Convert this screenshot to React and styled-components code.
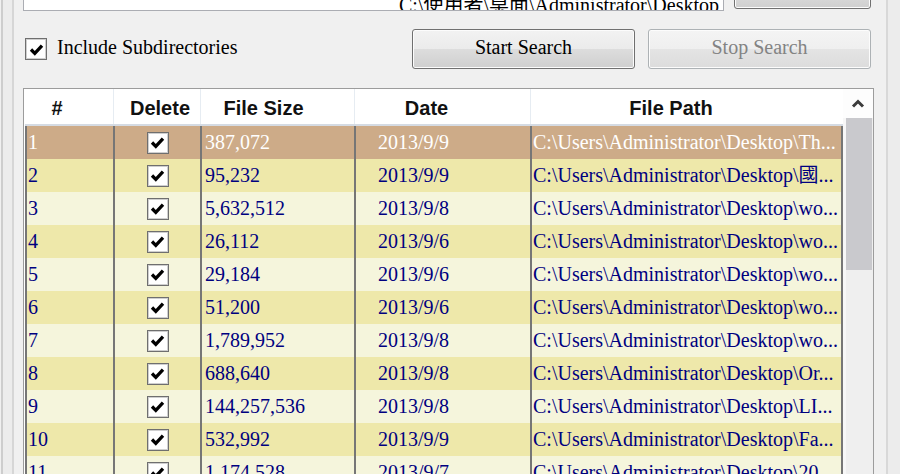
import React from "react";
import styled, { createGlobalStyle } from "styled-components";

const GlobalStyle = createGlobalStyle`
  html, body {
    margin: 0;
    padding: 0;
  }
  body {
    background: #f0f0f0;
    font-family: "Liberation Serif", "Noto Sans CJK TC", serif;
  }
`;

const rows = [
  ["1", "387,072", "2013/9/9", "C:\\Users\\Administrator\\Desktop\\Th..."],
  ["2", "95,232", "2013/9/9", "C:\\Users\\Administrator\\Desktop\\國..."],
  ["3", "5,632,512", "2013/9/8", "C:\\Users\\Administrator\\Desktop\\wo..."],
  ["4", "26,112", "2013/9/6", "C:\\Users\\Administrator\\Desktop\\wo..."],
  ["5", "29,184", "2013/9/6", "C:\\Users\\Administrator\\Desktop\\wo..."],
  ["6", "51,200", "2013/9/6", "C:\\Users\\Administrator\\Desktop\\wo..."],
  ["7", "1,789,952", "2013/9/8", "C:\\Users\\Administrator\\Desktop\\wo..."],
  ["8", "688,640", "2013/9/8", "C:\\Users\\Administrator\\Desktop\\Or..."],
  ["9", "144,257,536", "2013/9/8", "C:\\Users\\Administrator\\Desktop\\LI..."],
  ["10", "532,992", "2013/9/9", "C:\\Users\\Administrator\\Desktop\\Fa..."],
  ["11", "1,174,528", "2013/9/7", "C:\\Users\\Administrator\\Desktop\\20..."],
];

const headers = [
  { label: "#", shift: -12 },
  { label: "Delete", shift: 3 },
  { label: "File Size", shift: -14 },
  { label: "Date", shift: -16 },
  { label: "File Path", shift: -16 },
];

const Check = () => (
  <svg width="15" height="13" viewBox="0 0 15 13">
    <polyline
      points="2,6.5 5.8,10.3 13,2.6"
      fill="none"
      stroke="#000"
      strokeWidth="3.3"
    />
  </svg>
);

export default function App() {
  return (
    <>
      <GlobalStyle />
      <Window>
        <LeftRail />
        <Main>
          <TopRow>
            <PathInput>
              <PathText>C:\使用者\桌面\Administrator\Desktop</PathText>
            </PathInput>
            <Button $w={137} $h={36} />
          </TopRow>
          <ControlRow>
            <CheckLabel>
              <Box>
                <Check />
              </Box>
              <LabelText>Include Subdirectories</LabelText>
            </CheckLabel>
            <Button $w={223} $h={40}>
              Start Search
            </Button>
            <Button $w={223} $h={40} disabled>
              Stop Search
            </Button>
          </ControlRow>
          <Table>
            <Grid>
              <HeaderRow>
                {headers.map((h) => (
                  <HeadCell key={h.label} $shift={h.shift}>
                    {h.label}
                  </HeadCell>
                ))}
              </HeaderRow>
              {rows.map((r, i) => (
                <Row
                  key={r[0]}
                  $tone={i === 0 ? "selected" : i % 2 === 1 ? "gold" : "pale"}
                >
                  <Cell $pad={1}>{r[0]}</Cell>
                  <Cell $center>
                    <Box>
                      <Check />
                    </Box>
                  </Cell>
                  <Cell $pad={3}>{r[1]}</Cell>
                  <Cell $pad={22}>{r[2]}</Cell>
                  <Cell $pad={1} $last>
                    {r[3]}
                  </Cell>
                </Row>
              ))}
            </Grid>
            <ScrollBar>
              <ScrollUp>
                <svg width="14" height="9" viewBox="0 0 14 9">
                  <polyline
                    points="2,7.5 7,2.5 12,7.5"
                    fill="none"
                    stroke="#3c3c3c"
                    strokeWidth="3"
                  />
                </svg>
              </ScrollUp>
              <Thumb />
            </ScrollBar>
          </Table>
        </Main>
        <RightRail />
      </Window>
    </>
  );
}

const Window = styled.div`
  display: flex;
  width: 900px;
  height: 474px;
  overflow: hidden;
  background: #f0f0f0;
`;

const LeftRail = styled.div`
  width: 23px;
  flex-shrink: 0;
  background: linear-gradient(
    90deg,
    #f0f0f0 0 1px,
    #cdcdcd 1px 3px,
    #ececec 3px 12px,
    #d6d6d6 12px 14px,
    #f0f0f0 14px
  );
`;

const RightRail = styled.div`
  width: 26px;
  flex-shrink: 0;
  background: linear-gradient(
    90deg,
    #f0f0f0 0 12px,
    #d8d8d8 12px 14px,
    #ececec 14px
  );
`;

const Main = styled.div`
  width: 851px;
  flex-shrink: 0;
  display: flex;
  flex-direction: column;
  min-height: 0;
`;

const TopRow = styled.div`
  height: 11px;
  flex-shrink: 0;
  display: flex;
  align-items: flex-end;
  gap: 10px;
  padding-right: 3px;
  overflow: hidden;
`;

const PathInput = styled.div`
  width: 701px;
  height: 40px;
  box-sizing: border-box;
  flex-shrink: 0;
  border: 1px solid #abadb3;
  background: #fff;
  display: flex;
  align-items: flex-end;
  justify-content: flex-end;
  padding: 0 4px;
  overflow: hidden;
  font-size: 20px;
  line-height: 20px;
  color: #000;
  white-space: nowrap;
`;

const PathText = styled.span`
  margin-bottom: -5px;
`;

const Button = styled.button`
  width: ${(p) => p.$w}px;
  height: ${(p) => p.$h}px;
  flex-shrink: 0;
  box-sizing: border-box;
  margin: 0 0 ${(p) => (p.$h === 36 ? 2 : 0)}px;
  padding: 0 0 3px;
  border: 1px solid #707070;
  border-radius: 3px;
  box-shadow: inset 0 0 0 1px #fcfcfc;
  background: linear-gradient(
    #f2f2f2 0%,
    #ebebeb 50%,
    #dddddd 50%,
    #cfcfcf 100%
  );
  font-family: "Liberation Serif", serif;
  font-size: 20px;
  color: #000;
  &:disabled {
    color: #838383;
    border-color: #adb2b5;
    background: linear-gradient(
      #f4f4f4 0%,
      #efefef 50%,
      #e4e4e4 50%,
      #dcdcdc 100%
    );
  }
`;

const ControlRow = styled.div`
  margin-top: 18px;
  height: 40px;
  flex-shrink: 0;
  display: flex;
  align-items: center;
  gap: 13px;
  padding-right: 3px;
`;

const CheckLabel = styled.label`
  flex: 1;
  display: flex;
  align-items: center;
  gap: 10px;
  padding-left: 2px;
  font-size: 20px;
  color: #000;
`;

const LabelText = styled.span`
  margin-top: -4px;
`;

const Box = styled.span`
  width: 22px;
  height: 22px;
  box-sizing: border-box;
  flex-shrink: 0;
  display: inline-flex;
  align-items: center;
  justify-content: center;
  background: #fff;
  border: 1px solid #6f6f6f;
  box-shadow: inset 0 0 0 1px #cfcfcf;
`;

const Table = styled.div`
  margin-top: 19px;
  flex: 1;
  min-height: 0;
  display: flex;
  box-sizing: border-box;
  border: 1px solid #9c9c9c;
  border-bottom: none;
  padding-left: 1px;
  background: #fff;
  overflow: hidden;
`;

const Grid = styled.div`
  width: 818px;
  flex-shrink: 0;
  display: flex;
  flex-direction: column;
`;

const columns = "88px 87px 154px 176px 313px";

const HeaderRow = styled.div`
  display: grid;
  grid-template-columns: ${columns};
  height: 37px;
  box-sizing: border-box;
  flex-shrink: 0;
  border-bottom: 2px solid #d5dbe3;
  background: #fff;
`;

const HeadCell = styled.div`
  display: flex;
  align-items: center;
  justify-content: center;
  padding-top: 3px;
  padding-left: ${(p) => Math.max(0, p.$shift * 2)}px;
  padding-right: ${(p) => Math.max(0, -p.$shift * 2)}px;
  border-left: 1px solid #e6ecf2;
  font-family: "Liberation Sans", Arial, sans-serif;
  font-weight: bold;
  font-size: 20px;
  color: #111;
  &:first-child {
    border-left: none;
  }
`;

const tones = {
  selected: { bg: "#cdab88", fg: "#ffffff" },
  gold: { bg: "#eee8aa", fg: "#000080" },
  pale: { bg: "#f5f5dc", fg: "#000080" },
};

const Row = styled.div`
  display: grid;
  grid-template-columns: ${columns};
  height: 33px;
  flex-shrink: 0;
  background: ${(p) => tones[p.$tone].bg};
  color: ${(p) => tones[p.$tone].fg};
  font-size: 20px;
  line-height: 33px;
`;

const Cell = styled.div`
  box-sizing: border-box;
  border-left: 2px solid #767676;
  border-right: ${(p) => (p.$last ? "2px solid #767676" : "none")};
  padding-left: ${(p) => p.$pad || 0}px;
  white-space: nowrap;
  overflow: hidden;
  display: ${(p) => (p.$center ? "flex" : "block")};
  align-items: center;
  justify-content: center;
`;

const ScrollBar = styled.div`
  width: 30px;
  flex-shrink: 0;
  display: flex;
  flex-direction: column;
  background: linear-gradient(90deg, #f7f7f7 0 3px, #efefef 3px);
`;

const ScrollUp = styled.div`
  height: 29px;
  flex-shrink: 0;
  display: flex;
  align-items: center;
  justify-content: center;
  background: #fdfdfd;
`;

const Thumb = styled.div`
  height: 152px;
  margin: 0 1px 0 3px;
  background: #c9c9cd;
`;
